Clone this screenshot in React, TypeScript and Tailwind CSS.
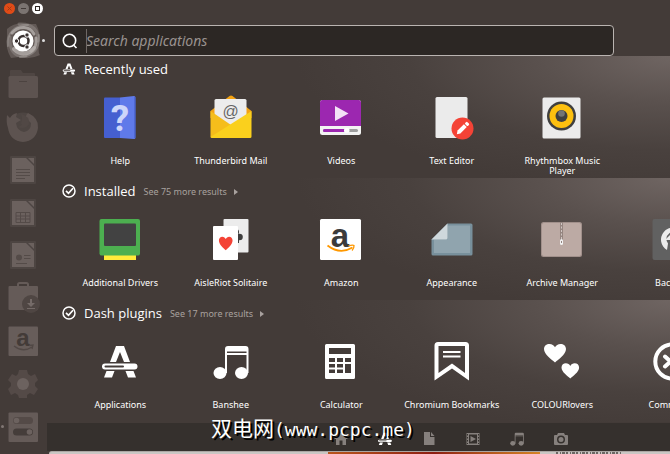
import React from 'react';

type IconProps = { children: React.ReactNode };

const AppSvg: React.FC<IconProps> = ({ children }) => (
  <svg viewBox="0 0 48 48" className="w-12 h-12" aria-hidden="true">{children}</svg>
);

const LaunchSvg: React.FC<IconProps> = ({ children }) => (
  <svg viewBox="0 0 40 40" className="w-10 h-10" aria-hidden="true">{children}</svg>
);

const HEART = 'M12 21 C9 18 1 12.500 1 6.500 C1 3 3.500 1 6.500 1 C9 1 11 2.500 12 4.500 C13 2.500 15 1 17.500 1 C20.500 1 23 3 23 6.500 C23 12.500 15 18 12 21 Z';

const AppsShape = () => (
  <>
    <path d="M20 8 H28 L34 24 H28 L24 14 L20 24 H14 Z" />
    <path fillRule="evenodd" d="M9 25.500 H38.500 a3 3 0 0 1 0 6 H9 a3 3 0 0 1 0-6 Z M9.500 27.500 a1 1 0 0 0 0 2 H27 a1 1 0 0 0 0-2 Z" />
    <path d="M10.500 33 H18.500 L16 39.500 H8 Z M29.500 33 H37.500 L40 39.500 H32 Z" />
  </>
);

const NotesShape = () => (
  <>
    <path fillRule="evenodd" d="M18 11 q0-3 3-3 H38.500 q3 0 3 3 V35 H39.500 V17 H20 V35 H18 Z M20 13.500 V15 H39.500 V13.500 Z" />
    <ellipse cx="13" cy="35" rx="6.500" ry="6" />
    <ellipse cx="34.500" cy="35" rx="6.500" ry="6" />
  </>
);

const HelpIcon = () => (
  <AppSvg>
    <path d="M9 3.500 H24 V44 H9 q-1 0-1-1 V4.500 q0-1 1-1 Z" fill="#455fd0" />
    <path d="M24 3.500 L38 2 q1.500 0 1.500 1.500 V43.500 q0 1.500-1.500 1.500 L24 44 Z" fill="#5f7aea" />
    <path d="M39 3 V44" stroke="#3f57bd" />
    <text x="24" y="37" textAnchor="middle" fontFamily="Roboto, sans-serif" fontSize="37" fontWeight="700" fill="#cdd6fa">?</text>
  </AppSvg>
);

const MailIcon = () => (
  <AppSvg>
    <path d="M3.500 17 L22.500 2 q1.500-1 3 0 L44.500 17 V24 H3.500 Z" fill="#f4a313" />
    <path d="M9 5 H38 q1.500 0 1.500 1.500 V32 H7.500 V6.500 q0-1.500 1.500-1.500 Z" fill="#ececec" />
    <text x="23.500" y="23" textAnchor="middle" fontFamily="Liberation Sans, sans-serif" fontSize="16" fill="#666">@</text>
    <path d="M3.500 17 L24 31 L12 44 H5 q-1.500 0-1.500-1.500 Z" fill="#f5bd1b" />
    <path d="M44.500 17 V42.500 q0 1.500-1.500 1.500 H5 L3.500 43 Z" fill="#fad01d" />
  </AppSvg>
);

const VideosIcon = () => (
  <AppSvg>
    <rect x="3" y="6" width="41" height="35" rx="2.500" fill="#f3f3f3" />
    <path d="M3 32 V8.500 q0-2.500 2.500-2.500 H41.500 q2.500 0 2.500 2.500 V32 Z" fill="#9c27b0" />
    <path d="M18 12 L31.500 19.500 L18 27 Z" fill="#f3e1f6" />
    <rect x="6" y="35" width="35" height="3" rx="1.500" fill="#9e9e9e" />
    <path d="M7.500 35 H28 V38 H7.500 a1.500 1.500 0 0 1 0-3 Z" fill="#9c27b0" />
    <rect x="27" y="34" width="5.500" height="5" rx="2" fill="#fff" />
  </AppSvg>
);

const TextEditorIcon = () => (
  <AppSvg>
    <rect x="7.500" y="3" width="32" height="41" rx="1.500" fill="#ebebeb" />
    <circle cx="34.500" cy="34.500" r="11" fill="#f44336" />
    <g transform="translate(34.500 34.500) rotate(45)" fill="#fff">
      <path d="M-2 -4 H2 V5 L0 8 L-2 5 Z" />
      <rect x="-2" y="-8" width="4" height="3" rx="1" />
    </g>
  </AppSvg>
);

const RhythmboxIcon = () => (
  <AppSvg>
    <rect x="4.500" y="3.500" width="38" height="41" rx="1.500" fill="#ebebeb" />
    <circle cx="23.500" cy="22" r="14.500" fill="#3f3f3f" />
    <circle cx="23.500" cy="22" r="12" fill="#fdc00f" />
    <circle cx="23.500" cy="22" r="6" fill="#3f3f3f" />
    <circle cx="23.500" cy="19.500" r="3.300" fill="#747474" />
  </AppSvg>
);

const DriversIcon = () => (
  <AppSvg>
    <rect x="8" y="38" width="32" height="6" fill="#ffeb3b" />
    <rect x="3.500" y="3" width="40.500" height="36.500" rx="2" fill="#4caf50" />
    <rect x="8" y="7.500" width="32" height="22.500" rx="1" fill="#424242" />
  </AppSvg>
);

const SolitaireIcon = () => (
  <AppSvg>
    <rect x="16.500" y="3" width="25" height="33.500" rx="1" fill="#ececec" />
    <g fill="#3f3f3f">
      <circle cx="29" cy="16" r="3" />
      <circle cx="32.500" cy="21" r="3.300" />
      <path d="M30 22 H32 V27 H30 Z" />
    </g>
    <rect x="6" y="10" width="25" height="34" rx="1" fill="#fff" />
    <path d={HEART} transform="translate(11.300 20) scale(.620 .680)" fill="#f44336" />
  </AppSvg>
);

const AmazonIcon = () => (
  <AppSvg>
    <rect x="3" y="3" width="41" height="41" rx="1.500" fill="#fff" />
    <text x="23" y="31" textAnchor="middle" fontFamily="Liberation Sans, sans-serif" fontSize="33" fontWeight="700" fill="#3b3b3b">a</text>
    <path d="M10.500 29.500 Q23 39 35.500 31.500" fill="none" stroke="#ff9800" strokeWidth="1.800" />
    <path d="M31.500 29.800 Q36 28.500 37 29.500 Q37.300 32 35 34.500" fill="none" stroke="#ff9800" strokeWidth="1.300" />
  </AppSvg>
);

const AppearanceIcon = () => (
  <AppSvg>
    <path d="M19.500 7.500 H43 q1.500 0 1.500 1.500 V38 q0 1.500-1.500 1.500 H5 q-1.500 0-1.500-1.500 V23.500 Z" fill="#78909c" />
    <path d="M19.500 9.500 H42 V37 H6 V23.500 H19.500 Z" fill="#90a4ae" />
    <path d="M3.500 23.500 L19.500 7.500 V22 q0 1.500-1.500 1.500 Z" fill="#cfd8dc" />
  </AppSvg>
);

const ArchiveIcon = () => (
  <AppSvg>
    <rect x="3" y="6" width="41" height="35" rx="2.500" fill="#a1908b" />
    <rect x="4" y="7" width="39" height="33" rx="2" fill="#bcaaa4" />
    <path d="M23.500 6 V24" stroke="#958580" strokeWidth="3" />
    <path d="M23.500 7 V24" stroke="#d0c6c3" strokeWidth="1" strokeDasharray="2 1.500" />
    <rect x="22" y="23" width="3" height="6" rx="1.500" fill="#f1f1f1" />
    <path d="M23.500 25 V27" stroke="#958580" />
  </AppSvg>
);

const BackupsIcon = () => (
  <AppSvg>
    <rect x="3.500" y="3" width="41" height="41" rx="2" fill="#616161" />
    <path d="M18 34 A12 12 0 1 1 30 34 L28 29 A7 7 0 1 0 19 27.500 Z" fill="#ececec" />
    <path d="M16 24 L24 16 V24 Z" fill="#ececec" />
  </AppSvg>
);

const ApplicationsIcon = () => <AppSvg><g fill="#fff"><AppsShape /></g></AppSvg>;
const BansheeIcon = () => <AppSvg><g fill="#fff"><NotesShape /></g></AppSvg>;

const CalculatorIcon = () => (
  <AppSvg>
    <path
      fill="#fff"
      fillRule="evenodd"
      d="M9.500 6 H36.500 q1.500 0 1.500 1.500 V39.500 q0 1.500-1.500 1.500 H9.500 q-1.500 0-1.500-1.500 V7.500 q0-1.500 1.500-1.500 Z M12 10 V16 H34 V10 Z M12 20 V24 H18 V20 Z M20 20 V24 H26 V20 Z M28 20 V24 H34 V20 Z M12 26 V29.500 H18 V26 Z M20 26 V29.500 H26 V26 Z M28 26 V35 H34 V26 Z M12 31.500 V35 H18 V31.500 Z M20 31.500 V35 H26 V31.500 Z"
    />
  </AppSvg>
);

const BookmarksIcon = () => (
  <AppSvg>
    <path fill="#fff" fillRule="evenodd" d="M6.500 7.500 q0-3.500 3.500-3.500 H37.500 q3.500 0 3.500 3.500 V42.500 L24 30.500 L6.500 42.500 Z M10.500 8 V35 L24 25.500 L37 35 V8 Z" />
    <path d="M15 14 H32.500 M15 18.500 H32.500" stroke="#fff" strokeWidth="2" />
  </AppSvg>
);

const LoversIcon = () => (
  <AppSvg>
    <g fill="#fff">
      <path d={HEART} transform="translate(5 5) scale(1 .930)" />
      <path d={HEART} transform="translate(22.700 24.500) scale(.800 .760)" />
    </g>
  </AppSvg>
);

const CommandsIcon = () => (
  <AppSvg>
    <circle cx="23.500" cy="23.500" r="17.200" fill="none" stroke="#fff" strokeWidth="4" />
    <path d="M16 18.500 L21.500 23.500 L16 28.500 M32 18.500 L26.500 23.500 L32 28.500" fill="none" stroke="#fff" strokeWidth="4" strokeLinecap="round" />
  </AppSvg>
);

const CheckIcon = () => (
  <svg viewBox="0 0 14 14" className="w-3.5 h-3.5" fill="none" stroke="#fff" aria-hidden="true">
    <circle cx="7" cy="7" r="6" strokeWidth="1.500" />
    <path d="M4 6.800 L6.500 9.300 L11 4.300" strokeWidth="1.700" />
  </svg>
);

const SmallAppsIcon = () => (
  <svg viewBox="4 4 40 40" className="w-3.5 h-3.5" fill="#fff" aria-hidden="true"><AppsShape /></svg>
);

const sections = [
  {
    title: 'Recently used',
    more: '',
    icon: <SmallAppsIcon />,
    apps: [
      { name: 'Help', icon: <HelpIcon /> },
      { name: 'Thunderbird Mail', icon: <MailIcon /> },
      { name: 'Videos', icon: <VideosIcon /> },
      { name: 'Text Editor', icon: <TextEditorIcon /> },
      { name: 'Rhythmbox Music Player', icon: <RhythmboxIcon /> },
    ],
  },
  {
    title: 'Installed',
    more: 'See 75 more results',
    icon: <CheckIcon />,
    apps: [
      { name: 'Additional Drivers', icon: <DriversIcon /> },
      { name: 'AisleRiot Solitaire', icon: <SolitaireIcon /> },
      { name: 'Amazon', icon: <AmazonIcon /> },
      { name: 'Appearance', icon: <AppearanceIcon /> },
      { name: 'Archive Manager', icon: <ArchiveIcon /> },
      { name: 'Backups', icon: <BackupsIcon /> },
    ],
  },
  {
    title: 'Dash plugins',
    more: 'See 17 more results',
    icon: <CheckIcon />,
    apps: [
      { name: 'Applications', icon: <ApplicationsIcon /> },
      { name: 'Banshee', icon: <BansheeIcon /> },
      { name: 'Calculator', icon: <CalculatorIcon /> },
      { name: 'Chromium Bookmarks', icon: <BookmarksIcon /> },
      { name: 'COLOURlovers', icon: <LoversIcon /> },
      { name: 'Commands', icon: <CommandsIcon /> },
    ],
  },
];

const DocBase: React.FC<IconProps> = ({ children }) => (
  <LaunchSvg>
    <rect x="7" y="6" width="26" height="28" rx="1" fill="#4d4542" />
    <path d="M9 8 H23 L31 16 V32 H9 Z" fill="#6b615e" />
    <path d="M25 8 H31 V14 Z" fill="#6b615e" />
    {children}
  </LaunchSvg>
);

const launcher = [
  {
    name: 'Search your computer',
    icon: (
      <LaunchSvg>
        <path d="M4 8 Q12 1 24 3 L33 3 Q38 12 36 24 Q35 32 37 34 Q27 39 16 36 L8 37 Q2 27 4 16 Z" fill="#625956" />
        <g fill="none" stroke="#b5afac" strokeLinecap="round">
          <path d="M5 25 C3 12 12 4 25 4" strokeWidth="2" opacity=".4" />
          <path d="M16 3 C30 2 36 10 35 20" strokeWidth="3" opacity=".3" />
          <path d="M36 14 C37 28 30 35 17 36" strokeWidth="2" opacity=".4" />
          <path d="M23 35 C11 37 6 28 7 16" strokeWidth="3" opacity=".3" />
          <path d="M9 12 C16 4 27 5 31 13" strokeWidth="3" opacity=".8" />
          <path d="M31 27 C26 34 17 34 11 28" strokeWidth="4" opacity=".8" />
          <path d="M33 17 C34 24 32 27 28 30" strokeWidth="3" opacity=".8" />
        </g>
        <circle cx="20" cy="20" r="10.500" fill="#fff" />
        <circle cx="20.500" cy="20" r="5" fill="none" stroke="#393130" strokeWidth="2.500" />
        <g fill="#393130" stroke="#fff" strokeWidth="1">
          <circle cx="13.500" cy="20" r="2.200" />
          <circle cx="24" cy="14" r="2.200" />
          <circle cx="24" cy="26" r="2.200" />
        </g>
      </LaunchSvg>
    ),
  },
  {
    name: 'Files',
    icon: (
      <LaunchSvg>
        <path d="M7 12 V7 q0-1 1-1 H18 l2 3 H31 q1 0 1 1 V14 H7 Z" fill="#4f4643" />
        <rect x="5.500" y="12" width="29.500" height="22" rx="1.500" fill="#5d5350" />
        <path d="M16 17.500 H24" stroke="#4c4340" />
      </LaunchSvg>
    ),
  },
  {
    name: 'Firefox',
    icon: (
      <LaunchSvg>
        <circle cx="20" cy="20" r="14.500" fill="#4d4542" />
        <path d="M4 8 L7 11 Q9 7 14 6 L13 10 L18 13 L13 16 Q14 24 21 25 Q28 24 28 16 L25 13 L24 17 Q21 9 25 6 Q36 11 35 21 Q33 34 20 35 Q7 34 5 21 Q3 16 4 8 Z" fill="#5d5350" />
        <path d="M18 16 Q20 11 18 7 Q27 9 26 17 Q22 23 15 20 L19 18 Z" fill="#514845" />
      </LaunchSvg>
    ),
  },
  {
    name: 'Writer',
    icon: <DocBase><path d="M13 19.500 H27 M13 22.500 H27 M13 25.500 H27 M13 28.500 H22" stroke="#544b48" /></DocBase>,
  },
  {
    name: 'Calc',
    icon: <DocBase><path d="M13 19.500 H27 V29.500 H13 Z M13 23 H27 M13 26 H27 M17.500 19.500 V29.500 M22.500 19.500 V29.500" fill="none" stroke="#544b48" /></DocBase>,
  },
  {
    name: 'Impress',
    icon: (
      <DocBase>
        <circle cx="16" cy="22.500" r="3" fill="#544b48" />
        <path d="M21 20.500 H27.500 M21 23.500 H27.500 M13 28.500 H24" stroke="#544b48" />
      </DocBase>
    ),
  },
  {
    name: 'Software',
    icon: (
      <LaunchSvg>
        <path d="M15 9 V6.500 q0-1.500 1.500-1.500 H23.500 q1.500 0 1.500 1.500 V9" fill="none" stroke="#655b58" strokeWidth="2" />
        <rect x="5.500" y="8" width="29.500" height="24" rx="1" fill="#655b58" />
        <circle cx="28" cy="26" r="9" fill="#4f4643" />
        <path d="M27 21 H29 V25 H32 L28 29 L24 25 H27 Z M24 30 H32 V31 H24 Z" fill="#756b68" />
      </LaunchSvg>
    ),
  },
  {
    name: 'Amazon',
    icon: (
      <LaunchSvg>
        <rect x="5.500" y="5.500" width="29.500" height="29.500" rx="1" fill="#675d5a" />
        <text x="20" y="25" textAnchor="middle" fontFamily="Liberation Sans, sans-serif" fontSize="24" fontWeight="700" fill="#433b38">a</text>
        <path d="M11 25 Q20 32 29 26 M26.500 24.500 L30 24 L29 28" fill="none" stroke="#514845" strokeWidth="1.300" />
      </LaunchSvg>
    ),
  },
  {
    name: 'System Settings',
    icon: (
      <LaunchSvg>
        <path d="M16 6 H24 L25 10 L28 12 L32 10 L35 16 L32 19 V22 L35 25 L31 31 L27 29 L24 31 V34 H16 L15 31 L12 29 L8 31 L5 25 L8 22 V19 L5 16 L9 10 L13 12 L15 10 Z" fill="#544a47" />
        <circle cx="20" cy="20" r="6" fill="#6c625f" />
      </LaunchSvg>
    ),
  },
  {
    name: 'Tweak Tool',
    icon: (
      <LaunchSvg>
        <rect x="5.500" y="5.500" width="29.500" height="29.500" rx="1" fill="#655b58" />
        <rect x="10" y="10" width="20" height="7" rx="3.500" fill="#544a47" />
        <rect x="10" y="21.500" width="20" height="7" rx="3.500" fill="#453d3a" />
        <circle cx="13.500" cy="13.500" r="2.800" fill="#6c625f" />
        <circle cx="26.500" cy="25" r="2.800" fill="#6c625f" />
      </LaunchSvg>
    ),
  },
];

const lenses = [
  { name: 'Home', icon: <path d="M7 0.500 L14 7 H12 V13 H8.500 V8.500 H5.500 V13 H2 V7 H0 Z" /> },
  { name: 'Applications', active: true, icon: <g transform="translate(-2.300 -2.300) scale(.390)"><AppsShape /></g> },
  { name: 'Files', icon: <path d="M2 0 H8 V5 H12.500 V13 H2 Z M9 0 L12.500 4 H9 Z" /> },
  {
    name: 'Videos',
    icon: (
      <>
        <path fillRule="evenodd" d="M0.500 1 H13.500 V13 H0.500 Z M3 2.500 V11.500 H11 V2.500 Z" />
        <path d="M4.500 4 L10 7 L4.500 10 Z" />
        <path d="M1.500 2 V12 M12.500 2 V12" stroke="#35302d" strokeDasharray="1.500 1.500" />
      </>
    ),
  },
  { name: 'Music', icon: <g transform="translate(-2.300 -2.300) scale(.390)"><NotesShape /></g> },
  {
    name: 'Photos',
    icon: (
      <>
        <path fillRule="evenodd" d="M4 1 H10 L11 3 H13 q1 0 1 1 V12 q0 1-1 1 H1 q-1 0-1-1 V4 q0-1 1-1 H3 Z M7 3.500 a4 4 0 0 0 0 8 a4 4 0 0 0 0-8 Z" />
        <circle cx="7" cy="7.500" r="2.500" />
      </>
    ),
  },
];

const WindowControls = () => (
  <header className="flex h-[18px] items-start gap-[3px] pl-1 pt-[3px]">
    <button aria-label="Close" className="flex h-[11px] w-[11px] items-center justify-center rounded-full bg-[#e04b17]">
      <svg viewBox="0 0 5 5" className="h-[5px] w-[5px]"><path d="M.5 .5 L4.500 4.500 M4.500 .5 L.5 4.500" stroke="#a53a12" /></svg>
    </button>
    <button aria-label="Minimize" className="flex h-[11px] w-[11px] items-center justify-center rounded-full bg-[#7b7471]">
      <span className="h-px w-[5px] bg-[#433b38]" />
    </button>
    <button aria-label="Restore" className="flex h-[11px] w-[11px] items-center justify-center rounded-full bg-white">
      <span className="h-[5px] w-[5px] border border-[#302926]" />
    </button>
  </header>
);

const Launcher = () => (
  <nav aria-label="Launcher" className="flex w-[47px] shrink-0 flex-col justify-between pt-[2px] pb-[6px]">
    {launcher.map((item, idx) => (
      <button key={item.name} aria-label={item.name} className="relative flex h-[42px] w-[46px] items-center justify-center">
        {item.icon}
        {idx === 0 && <span className="absolute right-[1px] top-[19px] h-[3px] w-[3px] rounded-full bg-[#ddd]" />}
        {idx === launcher.length - 1 && <span className="absolute left-[1px] top-[19px] h-[3px] w-[3px] rounded-full bg-[#807774]" />}
      </button>
    ))}
  </nav>
);

const SearchBar = () => (
  <div className="relative ml-[7px] mr-14 flex h-[31px] items-center rounded-[4px] border border-[#bab4b1] bg-[#2c2724] pl-[7px]">
    <svg viewBox="0 0 16 16" className="h-4 w-4 shrink-0" fill="none" stroke="#fff" strokeWidth="1.600" aria-hidden="true">
      <circle cx="7.500" cy="7.500" r="6.200" />
      <path d="M11.500 12 L14.500 15" />
    </svg>
    <input
      type="text"
      aria-label="Search applications"
      placeholder="Search applications"
      className="ml-2 h-full min-w-0 flex-1 bg-transparent text-[14px] italic text-white outline-none placeholder:text-[#99928f]"
    />
    <span className="absolute left-[31px] h-6 w-px bg-[#6f6865]" />
  </div>
);

const App: React.FC = () => {
  return (
    <div className="flex min-h-screen flex-col overflow-hidden bg-[#433b38] font-['Noto_Sans',sans-serif] text-white">
      <WindowControls />
      <div className="flex flex-1">
        <Launcher />
        <main className="relative flex min-w-0 flex-1 flex-col pt-[7px]">
          <SearchBar />
          {sections.map((section) => (
            <section
              key={section.title}
              className="h-[122px] overflow-hidden bg-[radial-gradient(ellipse_60%_110%_at_100%_0%,#6f6562_0%,#5a514e_35%,#49413e_70%,#433b38_100%)]"
            >
              <div className="flex h-[26px] items-center pl-[15px]">
                {section.icon}
                <h2 className="ml-2 font-['Open_Sans',sans-serif] text-[13px] leading-4">{section.title}</h2>
                {section.more && (
                  <button className="ml-2 flex items-center gap-[7px] pt-px text-[9px] leading-4 text-[#a8a19e]">
                    {section.more}
                    <svg viewBox="0 0 4 6" className="h-1.5 w-1" fill="#a8a19e" aria-hidden="true"><path d="M0 0 L4 3 L0 6 Z" /></svg>
                  </button>
                )}
              </div>
              <div className="ml-[18px] mt-3 grid w-[663px] grid-cols-6">
                {section.apps.map((app) => (
                  <button key={app.name} className="flex flex-col items-center gap-3.5">
                    {app.icon}
                    <span className="w-[96px] text-center text-[9px] leading-[10px]">{app.name}</span>
                  </button>
                ))}
              </div>
            </section>
          ))}
          <footer className="mt-px flex h-7 items-center gap-6 bg-[#35302d] pl-[284px] pt-1">
            {lenses.map((lens) => (
              <button key={lens.name} aria-label={lens.name} className="flex w-5 justify-center">
                <svg viewBox="0 0 14 14" className="h-3.5 w-3.5" fill={lens.active ? '#fff' : '#86807d'}>{lens.icon}</svg>
              </button>
            ))}
          </footer>
          {/* edge of the window behind the dash */}
          <div className="ml-[2px] flex h-[3px] overflow-hidden rounded-tl-sm border-t border-[#aaa6a3] bg-[#c9c6c3]">
            <div className="ml-[45%] w-[34%] bg-linear-to-r from-[#b9551c] via-[#8d1d12] to-[#d58425]" />
            <svg viewBox="0 0 66 2" className="ml-4 h-0.5 w-[66px]" aria-hidden="true">
              <path d="M0 1 H66" stroke="#6b6663" strokeWidth="2" strokeDasharray="2 2 1 1 3 1" />
            </svg>
          </div>
          <p className="absolute bottom-[12px] left-[164px] whitespace-nowrap leading-6 [text-shadow:2px_2px_0_#000]">
            <span className="font-['Noto_Sans_CJK_SC',sans-serif] text-[21px]">双电网</span>
            <span className="font-['DejaVu_Sans_Mono',monospace] text-[18px]">(www.pcpc.me)</span>
          </p>
        </main>
      </div>
    </div>
  );
};

export default App;
